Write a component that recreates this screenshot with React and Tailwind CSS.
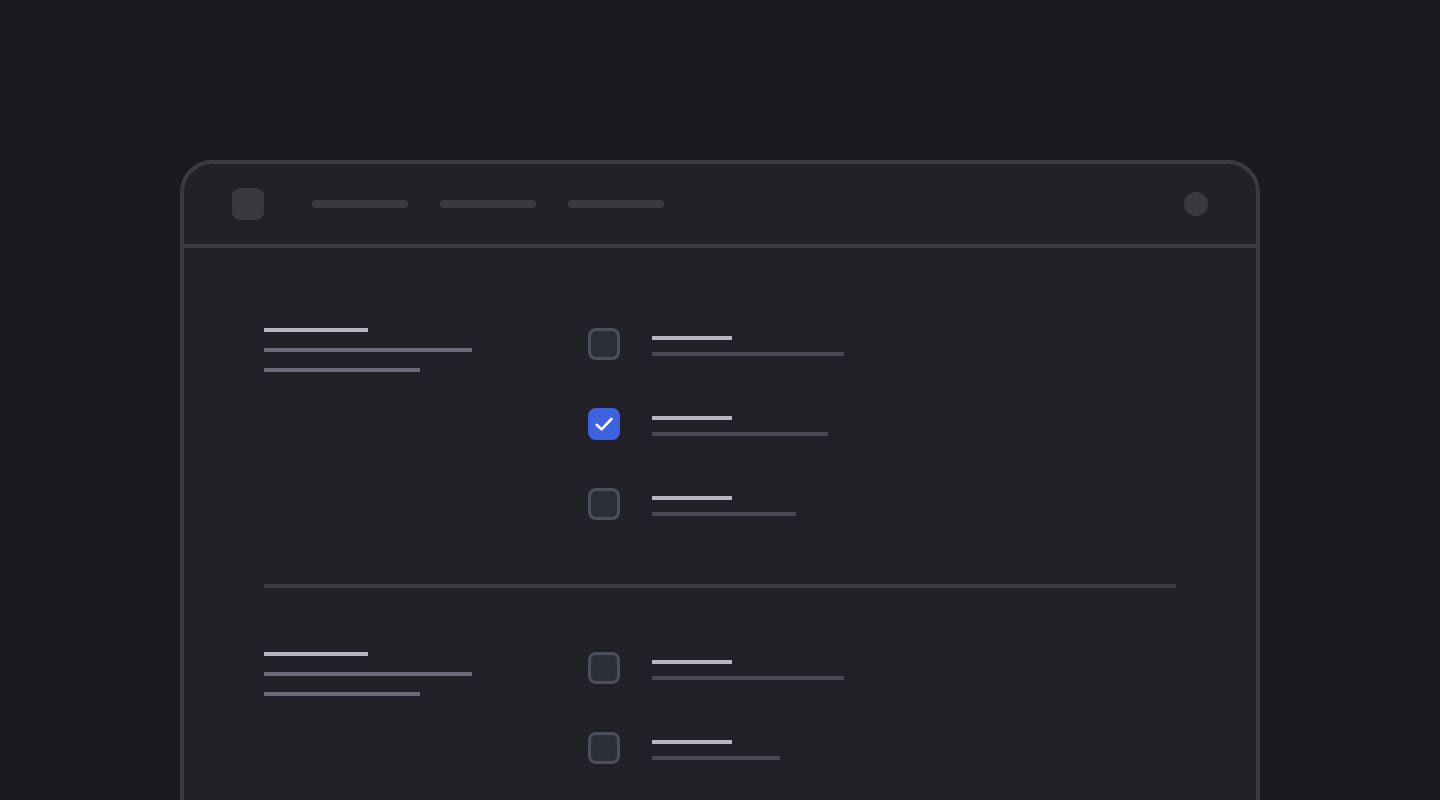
const navItems = [1, 2, 3];

const sections = [
  { rows: [{ w: 'w-[192px]', checked: false }, { w: 'w-[176px]', checked: true }, { w: 'w-[144px]', checked: false }] },
  { rows: [{ w: 'w-[192px]', checked: false }, { w: 'w-[128px]', checked: false }] },
];

function Checkbox({ checked }) {
  if (checked) {
    return (
      <div className="w-8 h-8 rounded-lg bg-[#3f62e0] flex items-center justify-center shrink-0">
        <svg width="32" height="32" viewBox="0 0 32 32" fill="none">
          <path d="M8.8 16.8L13.6 21.4L23.4 11" stroke="#ffffff" strokeWidth="2.6" strokeLinecap="round" strokeLinejoin="round" />
        </svg>
      </div>
    );
  }
  return <div className="w-8 h-8 rounded-lg border-[3px] border-[#4c4e59] bg-[#2d3037] shrink-0" />;
}

function Row({ w, checked }) {
  return (
    <div className="flex items-start gap-8">
      <Checkbox checked={checked} />
      <div className="pt-2 flex flex-col gap-3">
        <div className="w-20 h-1 bg-[#b9b8c3]" />
        <div className={`${w} h-1 bg-[#4a4a54]`} />
      </div>
    </div>
  );
}

function Section({ rows }) {
  return (
    <div className="flex py-16">
      <div className="w-[324px] shrink-0 flex flex-col gap-4">
        <div className="w-[104px] h-1 bg-[#b9b8c3]" />
        <div className="w-[208px] h-1 bg-[#6c6b77]" />
        <div className="w-[156px] h-1 bg-[#6c6b77]" />
      </div>
      <div className="flex flex-col gap-12">
        {rows.map((r, i) => (
          <Row key={i} {...r} />
        ))}
      </div>
    </div>
  );
}

export default function App() {
  return (
    <div className="h-[800px] overflow-hidden bg-[#1b1a1f] pt-40 px-[180px]">
      <div className="h-[760px] rounded-t-[32px] border-4 border-b-0 border-[#3a3a41] bg-[#222127]">
        <div className="h-[84px] px-12 flex items-center border-b-4 border-[#3a3a41]">
          <div className="w-8 h-8 rounded-lg bg-[#393940]" />
          <div className="ml-12 flex gap-8">
            {navItems.map((n) => (
              <div key={n} className="w-24 h-2 rounded-full bg-[#393940]" />
            ))}
          </div>
          <div className="ml-auto w-6 h-6 rounded-full bg-[#393940]" />
        </div>
        <div className="px-20 pt-4">
          <Section rows={sections[0].rows} />
          <div className="h-1 bg-[#3a3a41]" />
          <Section rows={sections[1].rows} />
        </div>
      </div>
    </div>
  );
}
